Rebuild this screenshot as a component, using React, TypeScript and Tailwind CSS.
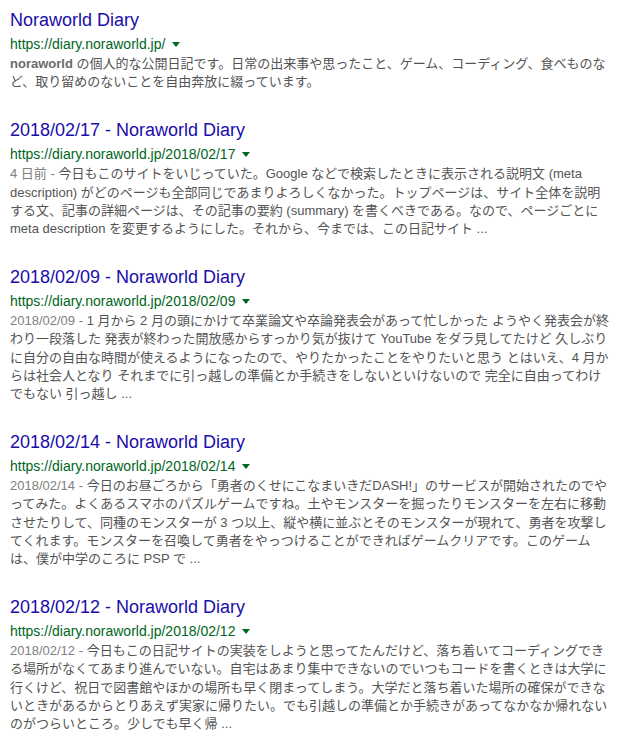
import React from "react";

type Result = {
  title: string;
  url: string;
  date?: string;
  lines: React.ReactNode[];
};

const results: Result[] = [
  {
    title: "Noraworld Diary",
    url: "https://diary.noraworld.jp/",
    lines: [
      <>
        <b className="font-bold text-[#6a6a6a]">noraworld</b> の個人的な公開日記です。日常の出来事や思ったこと、ゲーム、コーディング、食べものな
      </>,
      "ど、取り留めのないことを自由奔放に綴っています。",
    ],
  },
  {
    title: "2018/02/17 - Noraworld Diary",
    url: "https://diary.noraworld.jp/2018/02/17",
    date: "4 日前 - ",
    lines: [
      "今日もこのサイトをいじっていた。Google などで検索したときに表示される説明文 (meta",
      "description) がどのページも全部同じであまりよろしくなかった。トップページは、サイト全体を説明",
      "する文、記事の詳細ページは、その記事の要約 (summary) を書くべきである。なので、ページごとに",
      "meta description を変更するようにした。それから、今までは、この日記サイト ...",
    ],
  },
  {
    title: "2018/02/09 - Noraworld Diary",
    url: "https://diary.noraworld.jp/2018/02/09",
    date: "2018/02/09 - ",
    lines: [
      "1 月から 2 月の頭にかけて卒業論文や卒論発表会があって忙しかった ようやく発表会が終",
      "わり一段落した 発表が終わった開放感からすっかり気が抜けて YouTube をダラ見してたけど 久しぶり",
      "に自分の自由な時間が使えるようになったので、やりたかったことをやりたいと思う とはいえ、4 月か",
      "らは社会人となり それまでに引っ越しの準備とか手続きをしないといけないので 完全に自由ってわけ",
      "でもない 引っ越し ...",
    ],
  },
  {
    title: "2018/02/14 - Noraworld Diary",
    url: "https://diary.noraworld.jp/2018/02/14",
    date: "2018/02/14 - ",
    lines: [
      "今日のお昼ごろから「勇者のくせにこなまいきだDASH!」のサービスが開始されたのでや",
      "ってみた。よくあるスマホのパズルゲームですね。土やモンスターを掘ったりモンスターを左右に移動",
      "させたりして、同種のモンスターが 3 つ以上、縦や横に並ぶとそのモンスターが現れて、勇者を攻撃し",
      "てくれます。モンスターを召喚して勇者をやっつけることができればゲームクリアです。このゲーム",
      "は、僕が中学のころに PSP で ...",
    ],
  },
  {
    title: "2018/02/12 - Noraworld Diary",
    url: "https://diary.noraworld.jp/2018/02/12",
    date: "2018/02/12 - ",
    lines: [
      "今日もこの日記サイトの実装をしようと思ってたんだけど、落ち着いてコーディングでき",
      "る場所がなくてあまり進んでいない。自宅はあまり集中できないのでいつもコードを書くときは大学に",
      "行くけど、祝日で図書館やほかの場所も早く閉まってしまう。大学だと落ち着いた場所の確保ができな",
      "いときがあるからとりあえず実家に帰りたい。でも引越しの準備とか手続きがあってなかなか帰れない",
      "のがつらいところ。少しでも早く帰 ...",
    ],
  },
];

export default function App() {
  return (
    <div
      className="w-[619px] min-h-[750px] bg-white pl-[10px] pt-[7px]"
      style={{ fontFamily: '"Liberation Sans", Arial, "Noto Sans CJK JP", sans-serif' }}
    >
      <div className="flex flex-col gap-[26px]">
        {results.map((r, i) => (
          <div key={i} className="flex flex-col">
            <div className="text-[18px] leading-[26px] text-[#1a0dab] whitespace-nowrap">
              {r.title}
            </div>
            <div className="flex items-center text-[14px] leading-[22px] text-[#006621] whitespace-nowrap">
              <span>{r.url}</span>
              <span className="ml-[7px] mt-[1px] inline-block h-0 w-0 border-x-[4px] border-t-[5px] border-x-transparent border-t-[#006621]" />
            </div>
            <div className="text-[13px] leading-[18.2px] text-[#545454]">
              {r.lines.map((l, j) => (
                <div key={j} className="whitespace-nowrap">
                  {j === 0 && r.date ? <span className="text-[#808080]">{r.date}</span> : null}
                  {l}
                </div>
              ))}
            </div>
          </div>
        ))}
      </div>
    </div>
  );
}
